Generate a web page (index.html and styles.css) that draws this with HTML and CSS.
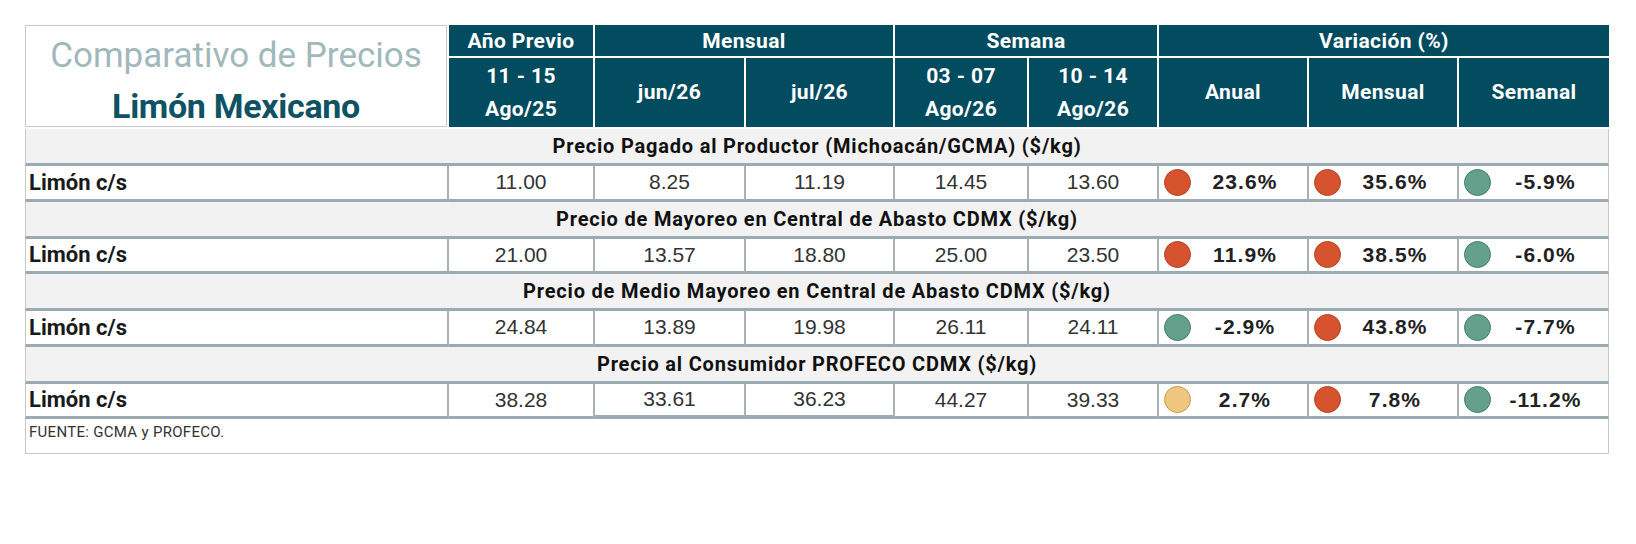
FILE: index.html
```html
<!DOCTYPE html>
<html lang="es">
<head>
<meta charset="utf-8">
<title>Comparativo de Precios - Limón Mexicano</title>
<link rel="stylesheet" href="styles.css">
</head>
<body>
<div class="page">
  <div class="grid">
    <div class="title">
      <div class="t1">Comparativo de Precios</div>
      <div class="t2">Limón Mexicano</div>
    </div>
    <div class="hd h1">Año Previo</div>
    <div class="hd h1 span2">Mensual</div>
    <div class="hd h1 span2">Semana</div>
    <div class="hd h1 span3 last">Variación (%)</div>

    <div class="hd h2"><span>11 - 15</span><span>Ago/25</span></div>
    <div class="hd h2">jun/26</div>
    <div class="hd h2">jul/26</div>
    <div class="hd h2"><span>03 - 07</span><span>Ago/26</span></div>
    <div class="hd h2"><span>10 - 14</span><span>Ago/26</span></div>
    <div class="hd h2">Anual</div>
    <div class="hd h2">Mensual</div>
    <div class="hd h2 last">Semanal</div>

    <div class="sec first">Precio Pagado al Productor (Michoacán/GCMA) ($/kg)</div>
    <div class="cell lbl">Limón c/s</div>
    <div class="cell num">11.00</div>
    <div class="cell num">8.25</div>
    <div class="cell num">11.19</div>
    <div class="cell num">14.45</div>
    <div class="cell num">13.60</div>
    <div class="cell pct"><span class="dot red"></span><span class="pv">23.6%</span></div>
    <div class="cell pct"><span class="dot red"></span><span class="pv">35.6%</span></div>
    <div class="cell pct end"><span class="dot green"></span><span class="pv">-5.9%</span></div>

    <div class="sec">Precio de Mayoreo en Central de Abasto CDMX ($/kg)</div>
    <div class="cell lbl">Limón c/s</div>
    <div class="cell num">21.00</div>
    <div class="cell num">13.57</div>
    <div class="cell num">18.80</div>
    <div class="cell num">25.00</div>
    <div class="cell num">23.50</div>
    <div class="cell pct"><span class="dot red"></span><span class="pv">11.9%</span></div>
    <div class="cell pct"><span class="dot red"></span><span class="pv">38.5%</span></div>
    <div class="cell pct end"><span class="dot green"></span><span class="pv">-6.0%</span></div>

    <div class="sec">Precio de Medio Mayoreo en Central de Abasto CDMX ($/kg)</div>
    <div class="cell lbl">Limón c/s</div>
    <div class="cell num">24.84</div>
    <div class="cell num">13.89</div>
    <div class="cell num">19.98</div>
    <div class="cell num">26.11</div>
    <div class="cell num">24.11</div>
    <div class="cell pct"><span class="dot green"></span><span class="pv">-2.9%</span></div>
    <div class="cell pct"><span class="dot red"></span><span class="pv">43.8%</span></div>
    <div class="cell pct end"><span class="dot green"></span><span class="pv">-7.7%</span></div>

    <div class="sec">Precio al Consumidor PROFECO CDMX ($/kg)</div>
    <div class="cell lbl">Limón c/s</div>
    <div class="cell num">38.28</div>
    <div class="cell num thick">33.61</div>
    <div class="cell num thick">36.23</div>
    <div class="cell num">44.27</div>
    <div class="cell num">39.33</div>
    <div class="cell pct"><span class="dot yellow"></span><span class="pv">2.7%</span></div>
    <div class="cell pct"><span class="dot red"></span><span class="pv">7.8%</span></div>
    <div class="cell pct end"><span class="dot green"></span><span class="pv">-11.2%</span></div>

    <div class="foot">FUENTE: GCMA y PROFECO.</div>
  </div>
</div>
</body>
</html>
```

FILE: styles.css
```css
* { box-sizing: border-box; }
html, body { margin: 0; padding: 0; background: #fff; }
.page { padding: 25px 0 0 25px; }

.grid {
  display: grid;
  grid-template-columns: 424px 146px 151px 149px 134px 130px 150px 150px 150px;
  width: 1584px;
  font-family: Roboto, "Liberation Sans", sans-serif;
}

.title {
  grid-row: span 2;
  margin-right: 2px;
  border: 1px solid #c9c9c9;
  background: #fff;
  display: flex;
  flex-direction: column;
  align-items: center;
  justify-content: center;
  gap: 10px;
  padding-top: 9px;
  height: 102px;
}
.t1 { font-size: 35px; color: #a1b8bc; line-height: 40px; font-weight: 400; }
.t2 { font-size: 34px; color: #0e5263; line-height: 40px; font-weight: 700; letter-spacing: -0.3px; }

.hd {
  background: #034b5e;
  color: #fff;
  font-weight: 700;
  font-size: 21px;
  display: flex;
  flex-direction: column;
  align-items: center;
  justify-content: center;
  border-right: 2px solid #fff;
  letter-spacing: 0.4px;
}
.hd.last { border-right: none; }
.h1 { height: 33px; border-bottom: 2px solid #fff; }
.h2 { height: 69px; line-height: 33px; }
.span2 { grid-column: span 2; }
.span3 { grid-column: span 3; }

.sec {
  grid-column: 1 / -1;
  height: 37px;
  background: #f2f2f2;
  border-bottom: 3px solid #9aabb2;
  border-left: 1px solid #c8c8c8;
  border-right: 1px solid #c8c8c8;
  display: flex;
  align-items: center;
  justify-content: center;
  font-weight: 700;
  font-size: 20px;
  color: #111;
  letter-spacing: 0.8px;
}
.sec.first { margin-top: 2px; }

.cell {
  height: 35.5px;
  background: #fff;
  border-bottom: 3px solid #9aabb2;
  border-right: 2px solid #a9b1b4;
  display: flex;
  align-items: center;
}
.cell.end { border-right: 1px solid #c8c8c8; }
.cell.thick { border-bottom-width: 4px; }

.lbl {
  border-left: 1px solid #c8c8c8;
  padding-left: 3px;
  font-weight: 700;
  font-size: 22px;
  color: #1a1a1a;
}
.num {
  justify-content: center;
  font-family: "Liberation Sans", Arial, sans-serif;
  font-size: 21px;
  color: #333;
}
.pct {
  padding-left: 5px;
  padding-right: 8px;
  font-family: "Liberation Sans", Arial, sans-serif;
  font-weight: 700;
  font-size: 21px;
  color: #222;
}
.pv { flex: 1; text-align: center; letter-spacing: 1.1px; }

.dot {
  width: 27px;
  height: 27px;
  border-radius: 50%;
  border: 1.5px solid;
  flex: none;
}
.red { background: #d6532f; border-color: #b5421f; }
.green { background: #64a08c; border-color: #417e69; }
.yellow { background: #f0c57f; border-color: #c49a47; }

.foot {
  grid-column: 1 / -1;
  height: 35px;
  border: 1px solid #c8c8c8;
  border-top: none;
  padding: 4px 0 0 3px;
  font-size: 15px;
  letter-spacing: 0.3px;
  color: #333;
}
```
